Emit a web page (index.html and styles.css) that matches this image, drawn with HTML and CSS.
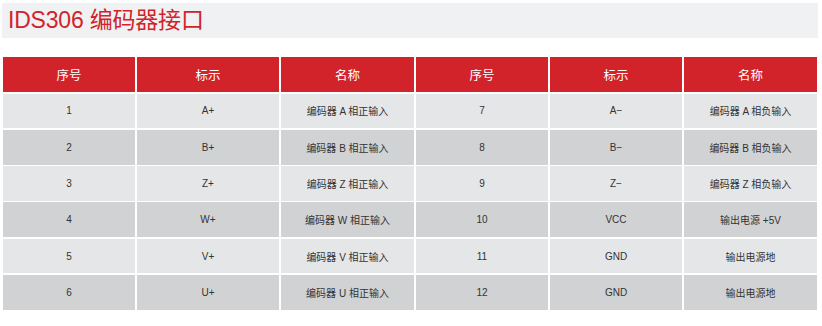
FILE: index.html
```html
<!DOCTYPE html>
<html lang="zh-CN">
<head>
<meta charset="utf-8">
<title>IDS306 编码器接口</title>
<link rel="stylesheet" href="styles.css">
</head>
<body>
<div class="page">
  <div class="title-bar"><h1 class="title">IDS306 编码器接口</h1></div>
  <div class="table">
    <div class="cell head">序号</div><div class="cell head">标示</div><div class="cell head">名称</div>
    <div class="cell head">序号</div><div class="cell head">标示</div><div class="cell head">名称</div>

    <div class="cell odd">1</div><div class="cell odd">A+</div><div class="cell odd">编码器 A 相正输入</div>
    <div class="cell odd">7</div><div class="cell odd">A−</div><div class="cell odd">编码器 A 相负输入</div>

    <div class="cell even">2</div><div class="cell even">B+</div><div class="cell even">编码器 B 相正输入</div>
    <div class="cell even">8</div><div class="cell even">B−</div><div class="cell even">编码器 B 相负输入</div>

    <div class="cell odd">3</div><div class="cell odd">Z+</div><div class="cell odd">编码器 Z 相正输入</div>
    <div class="cell odd">9</div><div class="cell odd">Z−</div><div class="cell odd">编码器 Z 相负输入</div>

    <div class="cell even">4</div><div class="cell even">W+</div><div class="cell even">编码器 W 相正输入</div>
    <div class="cell even">10</div><div class="cell even">VCC</div><div class="cell even">输出电源 +5V</div>

    <div class="cell odd">5</div><div class="cell odd">V+</div><div class="cell odd">编码器 V 相正输入</div>
    <div class="cell odd">11</div><div class="cell odd">GND</div><div class="cell odd">输出电源地</div>

    <div class="cell even">6</div><div class="cell even">U+</div><div class="cell even">编码器 U 相正输入</div>
    <div class="cell even">12</div><div class="cell even">GND</div><div class="cell even">输出电源地</div>
  </div>
</div>
</body>
</html>
```

FILE: styles.css
```css
* { box-sizing: border-box; }
html, body { margin: 0; padding: 0; background: #ffffff; }
body {
  font-family: "Liberation Sans", "Noto Sans CJK SC", sans-serif;
  color: #333333;
}
.page {
  padding: 3px 4px 0 2px;
  width: 822px;
}
.title-bar {
  background: #f0f1f3;
  height: 35px;
  width: 816px;
  display: flex;
  align-items: center;
  padding-left: 6px;
}
.title {
  margin: 0;
  font-size: 23px;
  font-weight: normal;
  color: #d2232a;
  line-height: 1;
  letter-spacing: -0.2px;
}
.table {
  margin-top: 19px;
  margin-left: 1px;
  display: grid;
  grid-template-columns: 132px 142px 133px 132px 132px 133px;
  grid-template-rows: 35px repeat(6, 34.8px);
  column-gap: 2px;
  row-gap: 1.5px;
  width: 814px;
}
.cell {
  display: flex;
  align-items: center;
  justify-content: center;
  font-size: 10px;
  color: #333333;
}
.head {
  background: #d2232a;
  color: #ffffff;
  font-size: 12.5px;
}
.odd { background: #e5e6e8; }
.even { background: #d1d2d4; }
```
